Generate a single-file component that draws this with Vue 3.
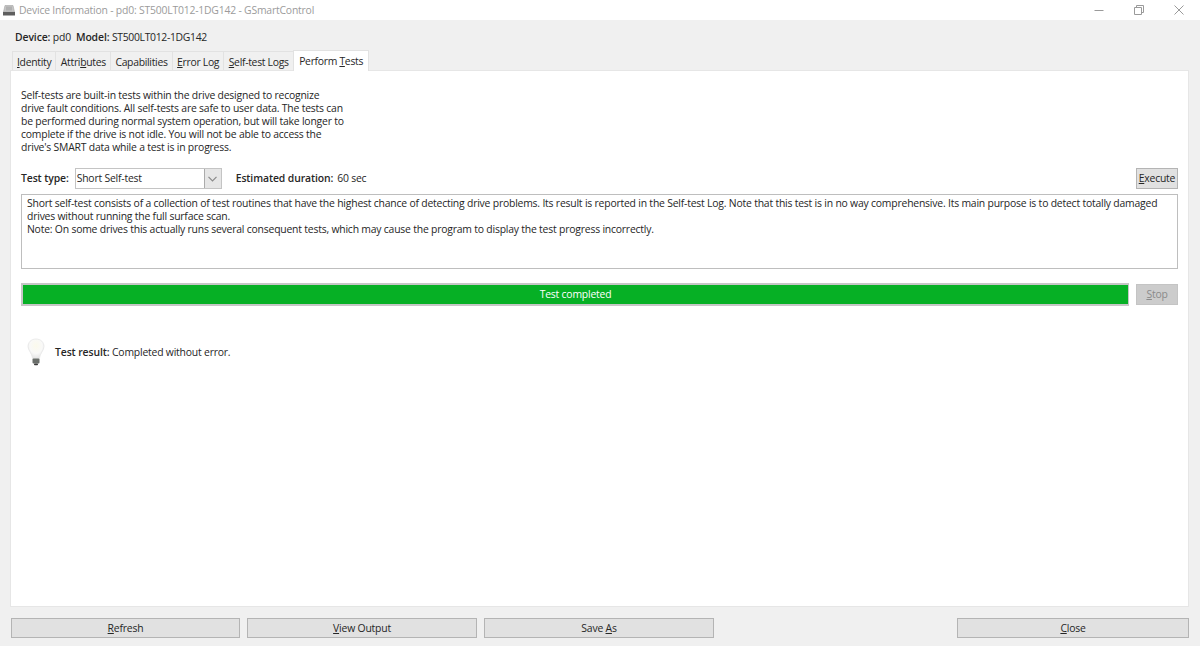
<script setup>
const tabs = [
  { pre: '', key: 'I', post: 'dentity' },
  { pre: 'Attri', key: 'b', post: 'utes' },
  { pre: 'Capabilities', key: '', post: '' },
  { pre: '', key: 'E', post: 'rror Log' },
  { pre: '', key: 'S', post: 'elf-test Logs' }
]
</script>

<template>
  <div class="window">
    <header class="titlebar">
      <svg class="appicon" width="14" height="14" viewBox="0 0 14 14">
        <path d="M3 2.5H11L12.5 9H1.5Z" fill="#c4c4c4" stroke="#a4a4a4" stroke-width="0.6" />
        <rect x="4" y="3.5" width="6" height="4" fill="#b0b0b0" />
        <rect x="1" y="9" width="12" height="3.5" fill="#5e5e5e" />
      </svg>
      <span class="title">Device Information - pd0: ST500LT012-1DG142 - GSmartControl</span>
      <div class="controls">
        <svg width="10" height="10" viewBox="0 0 10 10"><path d="M0.5 5.5H9.5" stroke="#9a9a9a" fill="none" /></svg>
        <svg width="10" height="10" viewBox="0 0 10 10"><path d="M0.5 2.5H7.5V9.5H0.5ZM2.5 2.5V0.5H9.5V7.5H7.5" stroke="#9a9a9a" fill="none" /></svg>
        <svg width="10" height="10" viewBox="0 0 10 10"><path d="M0.5 0.5L9.5 9.5M9.5 0.5L0.5 9.5" stroke="#9a9a9a" fill="none" /></svg>
      </div>
    </header>

    <main class="content">
      <div class="device"><b>Device:</b> pd0&nbsp; <b>Model:</b> <span class="model">ST500LT012-1DG142</span></div>

      <nav class="tabs">
        <div v-for="t in tabs" :key="t.pre + t.post" class="tab">{{ t.pre }}<u>{{ t.key }}</u>{{ t.post }}</div>
        <div class="tab active">Perform <u>T</u>ests</div>
      </nav>

      <section class="panel">
        <p class="intro">Self-tests are built-in tests within the drive designed to recognize<br />drive fault conditions. All self-tests are safe to user data. The tests can<br />be performed during normal system operation, but will take longer to<br />complete if the drive is not idle. You will not be able to access the<br />drive's SMART data while a test is in progress.</p>

        <div class="type-row">
          <b>Test type:</b>
          <div class="combo">
            <span class="combo-text">Short Self-test</span>
            <span class="combo-btn">
              <svg width="9" height="6" viewBox="0 0 9 6"><path d="M0.5 0.8L4.5 4.8L8.5 0.8" stroke="#8a8a8a" stroke-width="1.2" fill="none" /></svg>
            </span>
          </div>
          <b class="est">Estimated duration:</b>
          <span class="sec">60 sec</span>
          <button class="btn execute"><u>E</u>xecute</button>
        </div>

        <div class="desc">Short self-test consists of a collection of test routines that have the highest chance of detecting drive problems. Its result is reported in the Self-test Log. Note that this test is in no way comprehensive. Its main purpose is to detect totally damaged drives without running the full surface scan.<br />Note: On some drives this actually runs several consequent tests, which may cause the program to display the test progress incorrectly.</div>

        <div class="progress-row">
          <div class="progress"><div class="bar">Test completed</div></div>
          <button class="btn stop"><u>S</u>top</button>
        </div>

        <div class="result">
          <svg class="bulb" width="20" height="28" viewBox="0 0 20 28">
            <defs>
              <radialGradient id="glass" cx="0.5" cy="0.35" r="0.65">
                <stop offset="0" stop-color="#fbfaec" />
                <stop offset="0.6" stop-color="#f9f9f8" />
                <stop offset="1" stop-color="#e4e4e4" />
              </radialGradient>
            </defs>
            <path d="M10 1C5 1 2 4.5 2 8.5C2 12.5 6 15 6.6 20.5H13.4C14 15 18 12.5 18 8.5C18 4.5 15 1 10 1Z" fill="url(#glass)" stroke="#e6e6e6" stroke-width="0.8" />
            <rect x="6.5" y="20.5" width="7" height="5" rx="1" fill="#6b6f6b" />
            <rect x="8" y="25.5" width="4" height="1.8" rx="0.8" fill="#3c3c3c" />
          </svg>
          <span><b>Test result:</b> Completed without error.</span>
        </div>
      </section>

      <footer class="actions">
        <button class="btn action first"><u>R</u>efresh</button>
        <button class="btn action"><u>V</u>iew Output</button>
        <button class="btn action">Save <u>A</u>s</button>
        <button class="btn action close"><u>C</u>lose</button>
      </footer>
    </main>
  </div>
</template>

<style>
html, body { margin: 0; background: #f0f0f0; }
</style>

<style scoped>
.window {
  width: 1200px;
  height: 646px;
  display: flex;
  flex-direction: column;
  background: #f0f0f0;
  color: #262626;
  font: 10.4px/13px "Open Sans", "Noto Sans", sans-serif;
  letter-spacing: -0.2px;
  overflow: hidden;
}
b { font-weight: 600; letter-spacing: -0.1px; }
u { text-underline-offset: 1px; text-decoration-thickness: 1px; }
.titlebar {
  height: 20px;
  flex: none;
  display: flex;
  align-items: center;
  background: #fff;
  padding-left: 2px;
}
.appicon { flex: none; }
.title { margin-left: 3px; color: #9b9b9b; }
.controls {
  margin-left: auto;
  display: flex;
  gap: 30px;
  padding-right: 16px;
}
.content {
  flex: 1;
  min-height: 0;
  display: flex;
  flex-direction: column;
  padding: 0 11px 8px 10px;
}
.device { height: 30px; flex: none; padding: 11px 0 0 5px; box-sizing: border-box; }
.model { letter-spacing: -0.32px; }
.tabs { height: 20px; flex: none; display: flex; padding-left: 1.5px; align-items: flex-end; letter-spacing: -0.3px; }
.tab {
  height: 19px;
  box-sizing: border-box;
  padding: 4px 4px 0 4.5px;
  border: 1px solid #e2e2e2;
  border-bottom: 0;
  border-right: 0;
  background: #f0f0f0;
  white-space: nowrap;
}
.tab.active {
  height: 21px;
  padding: 4px 5px 0 5.5px;
  background: #fff;
  border-right: 1px solid #e2e2e2;
  position: relative;
  margin-bottom: -1px;
}
.panel {
  flex: 1;
  min-height: 0;
  background: #fff;
  border: 1px solid #e6e6e6;
  box-sizing: border-box;
  padding: 18px 10px 0 10px;
  display: flex;
  flex-direction: column;
}
.intro { margin: 0; }
.type-row {
  display: flex;
  align-items: center;
  height: 21px;
  margin-top: 14px;
}
.combo {
  width: 147px;
  height: 21px;
  margin-left: 6px;
  box-sizing: border-box;
  border: 1px solid #c4c4c4;
  display: flex;
  align-items: stretch;
}
.combo-text { flex: 1; padding: 3px 0 0 1px; }
.combo-btn {
  width: 16px;
  background: #e6e6e6;
  border-left: 1px solid #ababab;
  display: flex;
  align-items: center;
  justify-content: center;
}
.est { margin-left: 14px; }
.sec { margin-left: 4px; }
.btn {
  font: inherit;
  letter-spacing: inherit;
  color: #262626;
  background: #e1e1e1;
  border: 1px solid #b4b4b4;
  box-sizing: border-box;
  padding: 0;
  height: 21px;
}
.execute { margin-left: auto; width: 42px; }
.desc {
  margin-top: 5px;
  height: 75px;
  box-sizing: border-box;
  border: 1px solid #bebebe;
  padding: 2px 5px;
}
.progress-row { display: flex; align-items: center; margin-top: 14px; height: 23px; }
.progress {
  flex: 1;
  height: 23px;
  box-sizing: border-box;
  border: 2px solid #c6c6c6;
  border-right-width: 1px;
  background: #06b025;
}
.bar { color: #fff; text-align: center; line-height: 19px; }
.stop {
  margin-left: 7px;
  width: 42px;
  height: 21px;
  background: #cccccc;
  border-color: #c4c4c4;
  color: #8a8a8a;
}
.result { display: flex; align-items: center; margin-top: 32px; padding-left: 5px; height: 28px; }
.bulb { flex: none; }
.result span { margin-left: 9px; }
.actions { flex: none; height: 31px; padding-top: 11px; box-sizing: border-box; display: flex; gap: 7px; }
.action { width: 230px; height: 20px; }
.action.first { margin-left: 1px; width: 229px; }
.close { margin-left: auto; width: 232px; }
</style>
